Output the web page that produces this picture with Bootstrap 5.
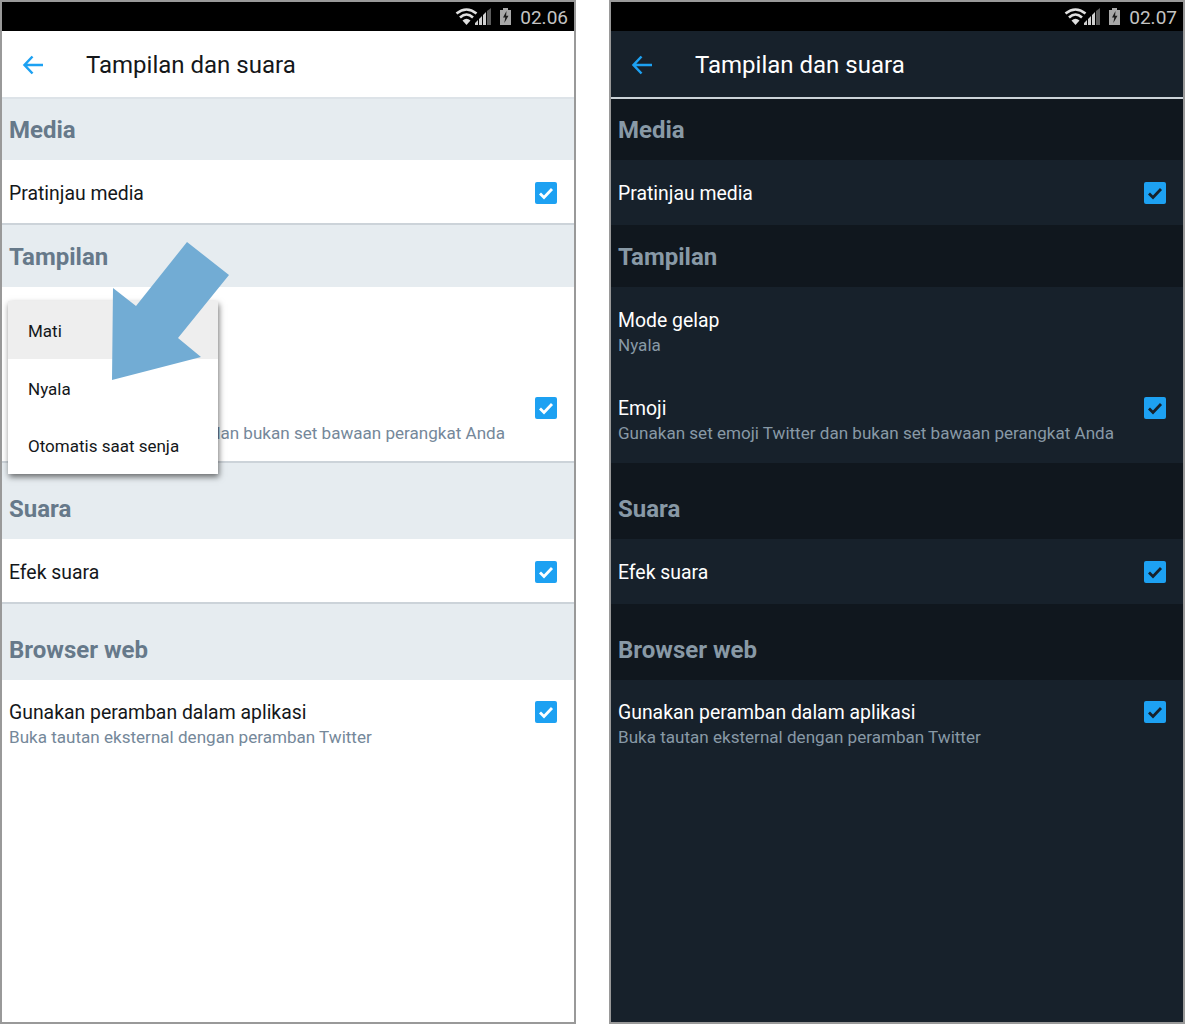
<!DOCTYPE html>
<html lang="en">
<head>
    <meta charset="UTF-8">
    <meta name="viewport" content="width=device-width, initial-scale=1.0">
    <title>Tampilan dan suara</title>
    <link href="https://cdn.jsdelivr.net/npm/bootstrap@5.3.0/dist/css/bootstrap.min.css" rel="stylesheet">
    <style>
        body {
            margin: 0;
            background: #fff;
            font-family: Roboto, "Liberation Sans", sans-serif;
            overflow: hidden;
        }
        .shots {
            width: 1185px;
            height: 1024px;
            gap: 33px;
        }
        .phone {
            position: relative;
            width: 576px;
            height: 1024px;
            border: 2px solid #999;
            background: #fff;
            color: #14171a;
            flex: none;
        }
        .phone-dark {
            background: #17212b;
            color: #fff;
        }
        .status-bar {
            height: 29px;
            background: #000;
            color: #c4c4c4;
            font-size: 19px;
            line-height: 29px;
            padding-right: 6px;
        }
        .status-bar svg { display: block; }
        .status-time { margin-left: 7px; margin-top: 1px; }
        .app-head {
            height: 68px;
            padding: 2px 0 0 19px;
            font-size: 24px;
            border-bottom: 2px solid #dde3e8;
        }
        .phone-dark .app-head { border-bottom-color: #ccd3d9; }
        .app-title { margin-left: 41px; }
        .sect-head {
            height: 62px;
            padding: 1px 7px 0;
            background: #e6ecf0;
            color: #66798a;
            font-size: 24px;
            font-weight: 700;
        }
        .phone-dark .sect-head { background: #10171e; color: #8899a6; }
        .sect-first { height: 61px; }
        .sect-tall { height: 76px; padding-top: 15px; }
        .set-row {
            padding: 21px 17px 0 7px;
            font-size: 19.4px;
            line-height: 26px;
        }
        .set-one { height: 65px; border-bottom: 2px solid #ccd3d9; }
        .set-mode { height: 88px; }
        .set-emoji { height: 88px; border-bottom: 2px solid #ccd3d9; }
        .set-web { padding-top: 20px; }
        .phone-dark .set-one, .phone-dark .set-emoji { border-bottom-color: #17212b; }
        .set-note {
            font-size: 17.07px;
            line-height: 22px;
            color: #75889a;
            white-space: nowrap;
        }
        .phone-dark .set-note { color: #8899a6; }
        .tick {
            width: 22px;
            height: 22px;
            margin-top: 1px;
            flex: none;
            border-radius: 2px;
            background: #1da1f2;
            color: #fff;
        }
        .phone-dark .tick { color: #17212b; }
        .tick svg { display: block; }
        .pop-menu {
            position: absolute;
            left: 6px;
            top: 299px;
            width: 210px;
            background: #fff;
            font-size: 17px;
            color: #14171a;
            box-shadow: 1px 3px 6px rgba(0, 0, 0, .55);
        }
        .pop-item { height: 58px; padding: 18px 20px 0; line-height: 24px; }
        .pop-item:last-child { height: 57px; padding-top: 17px; }
        .pop-on { background: #eeeeee; }
        .arrow-over {
            position: absolute;
            left: -2px;
            top: -2px;
            pointer-events: none;
        }
    </style>
</head>
<body>
    <svg width="0" height="0" class="position-absolute">
        <symbol id="status-icons" viewBox="0 0 58 20">
            <path d="M1.500 6.500Q11.500-1.500 21.500 6.500M5 10.500Q11.500 4.500 18 10.500" fill="none" stroke="#e0e0e0" stroke-width="2.600"/>
            <path d="M7.500 13.500Q11.500 10 15.500 13.500L11.500 18z" fill="#e0e0e0"/>
            <path d="M20 18v-2l3-3v5zM24 18v-6l3-3v9zM28 18V8l3-3v13z" fill="#cfcfcf"/>
            <path d="M32 18V4l4-3v17z" fill="#5c5c5c"/>
            <path d="M45 3h3V1h5v2h3v15H45z" fill="#a8a8a8"/>
            <path d="M51.500 4l-3.500 6.500h2.300l-1 5.500 4.200-7.300h-2.400z" fill="#1c1c1c"/>
        </symbol>
        <symbol id="tick-mark" viewBox="0 0 22 22">
            <path d="M5 11.500l4 4 8-8.500" fill="none" stroke="currentColor" stroke-width="2.800"/>
        </symbol>
        <symbol id="back-arrow" viewBox="0 0 24 24">
            <path d="M22 12H3.500M11.500 3.500L3.500 12l8 8.500" fill="none" stroke="#1da1f2" stroke-width="2.500"/>
        </symbol>
    </svg>

    <div class="shots d-flex">
        <div class="phone">
            <div class="status-bar d-flex justify-content-end align-items-center">
                <svg width="58" height="20"><use href="#status-icons"/></svg>
                <span class="status-time">02.06</span>
            </div>
            <div class="app-head d-flex align-items-center">
                <svg width="24" height="24"><use href="#back-arrow"/></svg>
                <span class="app-title">Tampilan dan suara</span>
            </div>
            <div class="sect-head sect-first d-flex align-items-center">Media</div>
            <div class="set-row set-one d-flex justify-content-between">
                <span>Pratinjau media</span>
                <span class="tick"><svg width="22" height="22"><use href="#tick-mark"/></svg></span>
            </div>
            <div class="sect-head d-flex align-items-center">Tampilan</div>
            <div class="set-row set-mode">
                <div>Mode gelap</div>
                <div class="set-note">Nyala</div>
            </div>
            <div class="set-row set-emoji d-flex justify-content-between">
                <div>
                    <div>Emoji</div>
                    <div class="set-note">Gunakan set emoji Twitter dan bukan set bawaan perangkat Anda</div>
                </div>
                <span class="tick"><svg width="22" height="22"><use href="#tick-mark"/></svg></span>
            </div>
            <div class="sect-head sect-tall d-flex align-items-center">Suara</div>
            <div class="set-row set-one d-flex justify-content-between">
                <span>Efek suara</span>
                <span class="tick"><svg width="22" height="22"><use href="#tick-mark"/></svg></span>
            </div>
            <div class="sect-head sect-tall d-flex align-items-center">Browser web</div>
            <div class="set-row set-web d-flex justify-content-between">
                <div>
                    <div>Gunakan peramban dalam aplikasi</div>
                    <div class="set-note">Buka tautan eksternal dengan peramban Twitter</div>
                </div>
                <span class="tick"><svg width="22" height="22"><use href="#tick-mark"/></svg></span>
            </div>

            <div class="pop-menu">
                <div class="pop-item pop-on">Mati</div>
                <div class="pop-item">Nyala</div>
                <div class="pop-item">Otomatis saat senja</div>
            </div>
            <svg class="arrow-over" width="576" height="400">
                <polygon points="112,380 201,357 178,338 229,275 187,242 136,306 113,288" fill="#72acd4"/>
            </svg>
        </div>

        <div class="phone phone-dark">
            <div class="status-bar d-flex justify-content-end align-items-center">
                <svg width="58" height="20"><use href="#status-icons"/></svg>
                <span class="status-time">02.07</span>
            </div>
            <div class="app-head d-flex align-items-center">
                <svg width="24" height="24"><use href="#back-arrow"/></svg>
                <span class="app-title">Tampilan dan suara</span>
            </div>
            <div class="sect-head sect-first d-flex align-items-center">Media</div>
            <div class="set-row set-one d-flex justify-content-between">
                <span>Pratinjau media</span>
                <span class="tick"><svg width="22" height="22"><use href="#tick-mark"/></svg></span>
            </div>
            <div class="sect-head d-flex align-items-center">Tampilan</div>
            <div class="set-row set-mode">
                <div>Mode gelap</div>
                <div class="set-note">Nyala</div>
            </div>
            <div class="set-row set-emoji d-flex justify-content-between">
                <div>
                    <div>Emoji</div>
                    <div class="set-note">Gunakan set emoji Twitter dan bukan set bawaan perangkat Anda</div>
                </div>
                <span class="tick"><svg width="22" height="22"><use href="#tick-mark"/></svg></span>
            </div>
            <div class="sect-head sect-tall d-flex align-items-center">Suara</div>
            <div class="set-row set-one d-flex justify-content-between">
                <span>Efek suara</span>
                <span class="tick"><svg width="22" height="22"><use href="#tick-mark"/></svg></span>
            </div>
            <div class="sect-head sect-tall d-flex align-items-center">Browser web</div>
            <div class="set-row set-web d-flex justify-content-between">
                <div>
                    <div>Gunakan peramban dalam aplikasi</div>
                    <div class="set-note">Buka tautan eksternal dengan peramban Twitter</div>
                </div>
                <span class="tick"><svg width="22" height="22"><use href="#tick-mark"/></svg></span>
            </div>
        </div>
    </div>

    <script src="https://cdn.jsdelivr.net/npm/bootstrap@5.3.0/dist/js/bootstrap.bundle.min.js"></script>
</body>
</html>
